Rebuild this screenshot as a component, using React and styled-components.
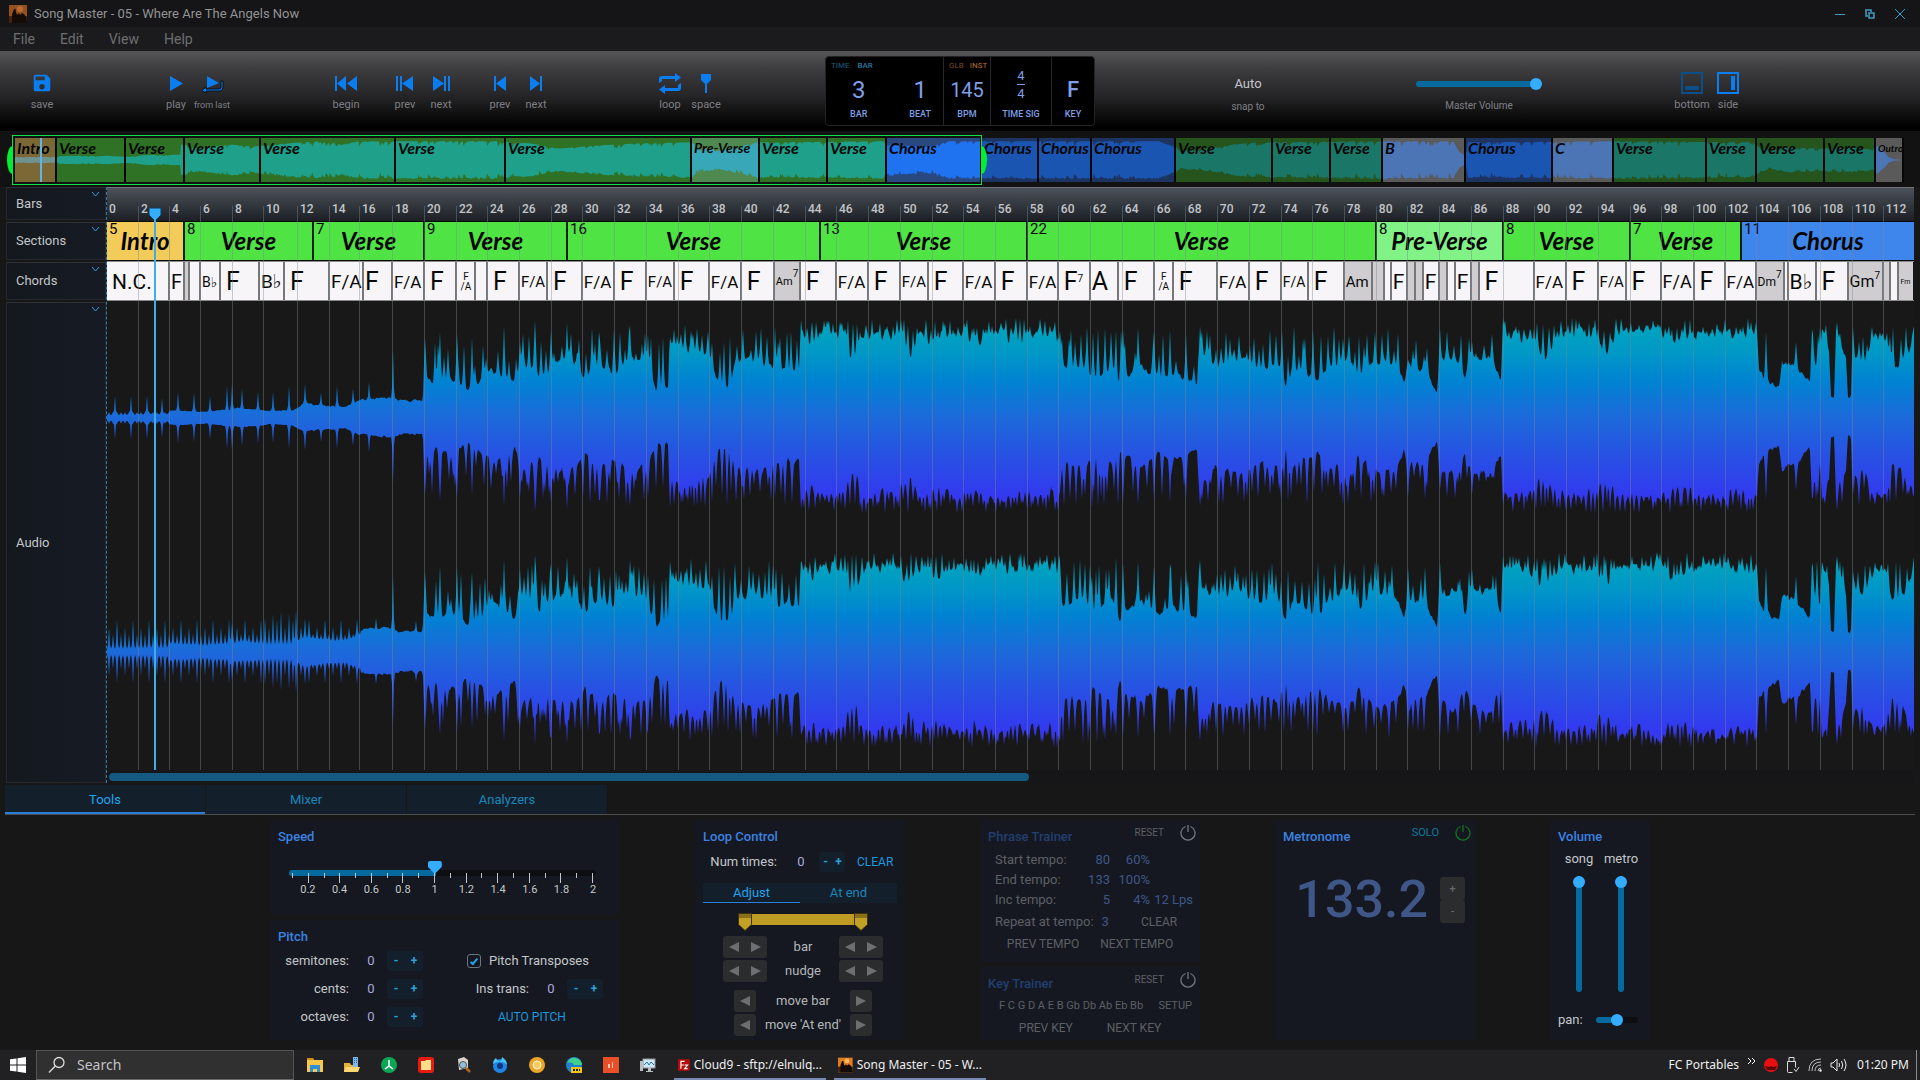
import React from "react";
import styled, { createGlobalStyle, css } from "styled-components";
import { MdSave } from "react-icons/md";

const Global = createGlobalStyle`
  *, *::before, *::after { box-sizing: border-box; }
  body { margin: 0; background: #171718; color: #c4c7ca; font: 13px/16px Roboto, "Liberation Sans", sans-serif; }
  button { font: inherit; color: inherit; background: none; border: 0; padding: 0; }
`;

const c = {
  blue: "#0a7df0",
  title: "#3b82e0",
  thumb: "#35adff",
  track: "#076a9e",
  panel: "#151820",
  tab: "#13202b",
  dim: "#5c6065",
  dimBlue: "#3f5788",
};

/* ---------- shell ---------- */

const Shell = styled.div`
  min-height: 100vh;
  display: flex;
  flex-direction: column;
`;

const TitleBar = styled.header`
  height: 27px;
  display: flex;
  align-items: center;
  gap: 7px;
  padding: 0 5px 0 9px;
  background: #151517;
  color: #929294;
`;

const WindowButtons = styled.div`
  margin-left: auto;
  display: flex;
  button { width: 30px; height: 24px; color: #3f9dc4; display: grid; place-items: center; }
`;

const MenuBar = styled.nav`
  height: 24px;
  display: flex;
  align-items: center;
  gap: 25px;
  padding: 0 13px;
  background: #1b1b1d;
  color: #6e6e70;
  font-size: 14px;
`;

const Toolbar = styled.div`
  height: 80px;
  display: grid;
  grid-template-columns: 1fr 270px 1fr;
  background: linear-gradient(#565658 0%, #3d3d3f 22%, #262628 55%, #000 95%);
`;

const ToolSide = styled.div`
  display: flex;
  align-items: flex-start;
  padding: ${(p) => (p.$right ? "21px 174px 0 117px" : "21px 0 0 24px")};
  justify-content: ${(p) => (p.$right ? "space-between" : "flex-start")};
`;

const ToolGroup = styled.div`
  display: flex;
  margin-right: ${(p) => p.$gap || 0}px;
`;

const Tool = styled.button`
  width: 36px;
  display: flex;
  flex-direction: column;
  align-items: center;
  gap: 4px;
  color: #7f7f83;
  font-size: ${(p) => (p.$small ? 9 : 11)}px;
  line-height: 14px;
  white-space: nowrap;
  svg { color: ${(p) => (p.$muted ? "#0c4f88" : c.blue)}; height: 22px; }
`;

const Snap = styled.label`
  width: 72px;
  display: flex;
  flex-direction: column;
  align-items: center;
  gap: 5px;
  color: #7f7f83;
  font-size: 10px;
  padding-top: 2px;
  button { color: #c4c7ca; font-size: 13px; line-height: 20px; }
`;

/* ---------- sliders ---------- */

const houseThumb = css`
  width: 14px; height: 13px; border-radius: 2px; margin-top: -9px;
  clip-path: polygon(0 0, 100% 0, 100% 45%, 50% 100%, 0 45%);
`;

const roundThumb = css`
  width: 12px; height: 12px; border-radius: 50%; margin-top: -3px;
`;

const Range = styled.input`
  appearance: none;
  display: block;
  margin: 0;
  width: ${(p) => p.$length}px;
  height: 14px;
  background: transparent;
  &::-webkit-slider-runnable-track {
    height: 6px;
    border-radius: 3px;
    background: linear-gradient(90deg, ${c.track} ${(p) => p.$fill}%, #0d0e11 ${(p) => p.$fill}%);
  }
  &::-webkit-slider-thumb {
    appearance: none;
    background: ${c.thumb};
    ${(p) => (p.$house ? houseThumb : roundThumb)}
  }
`;

const VRange = styled.input`
  appearance: none;
  display: block;
  margin: 0;
  writing-mode: vertical-lr;
  direction: rtl;
  width: 14px;
  height: 116px;
  background: transparent;
  &::-webkit-slider-runnable-track { width: 6px; border-radius: 3px; background: ${c.track}; }
  &::-webkit-slider-thumb {
    appearance: none; width: 12px; height: 12px; margin-left: -3px; border-radius: 50%; background: ${c.thumb};
  }
`;

const Master = styled.label`
  display: flex;
  flex-direction: column;
  align-items: center;
  gap: 7px;
  color: #7f7f83;
  font-size: 10px;
  padding-top: 5px;
`;

/* ---------- transport display ---------- */

const Lcd = styled.div`
  margin: 5px 0;
  display: grid;
  grid-template-columns: 117px 47px 61px 1fr;
  background: #000;
  border: 1px solid #232327;
  border-radius: 4px;
  color: #7f9fe6;
`;

const LcdCell = styled.div`
  display: flex;
  flex-direction: column;
  border-left: ${(p) => (p.$first ? 0 : "1px solid #26262b")};
  padding-top: 3px;
`;

const LcdModes = styled.div`
  height: 12px;
  display: flex;
  gap: ${(p) => (p.$gap ? 8 : 6)}px;
  padding-left: 5px;
  font-size: 8px;
  line-height: 12px;
  color: ${(p) => (p.$warm ? "#b8702f" : "#2a90c0")};
  span:first-child { opacity: .65; }
`;

const LcdFields = styled.div`
  flex: 1;
  display: flex;
  justify-content: center;
  gap: 42px;
  padding-left: ${(p) => (p.$shift ? 12 : 0)}px;
`;

const LcdField = styled.div`
  display: flex;
  flex-direction: column;
  align-items: center;
  strong {
    height: ${(p) => (p.$tall ? 48 : 36)}px;
    display: flex;
    flex-direction: column;
    justify-content: center;
    font-weight: ${(p) => p.$weight || 400};
    font-size: ${(p) => p.$size || 24}px;
    line-height: 18px;
  }
  small { font-size: 9px; line-height: 12px; font-weight: 500; white-space: nowrap; }
`;

const Fraction = styled.span`
  display: flex;
  flex-direction: column;
  align-items: center;
  font-size: 13px;
  line-height: 17px;
  i { width: 8px; height: 1px; background: #7f9fe6; }
`;

/* ---------- overview ---------- */

const Overview = styled.section`
  position: relative;
  padding: 7px 16px 5px 15px;
  background: #121213;
`;

const OverviewStrip = styled.div`
  height: 44px;
  display: flex;
  overflow: hidden;
`;

const MINI_FONT = { "Outro": 10, "Pre-Verse": 14 };

const MiniTile = styled.div`
  position: relative;
  flex: none;
  background: ${(p) => p.$bg};
  border-right: 2px solid #060606;
  overflow: hidden;
  svg { display: block; width: 100%; height: 44px; }
  span {
    position: absolute; left: 2px; top: 1px; color: #050505; white-space: nowrap;
    font: italic 700 ${(p) => MINI_FONT[p.$name] || 16}px/18px Lato, sans-serif;
  }
`;

const Selection = styled.div`
  position: absolute;
  left: 12px;
  width: 50.5%;
  top: 4px;
  bottom: 2px;
  border: 1px solid #10e048;
  &::before, &::after {
    content: ""; position: absolute; top: 10px; bottom: 10px; width: 6px; background: #00ee33;
  }
  &::before { left: -6px; border-radius: 6px 0 0 6px / 15px 0 0 15px; }
  &::after { right: -6px; border-radius: 0 6px 6px 0 / 0 15px 15px 0; }
`;

const MiniCursor = styled.i`
  position: absolute;
  left: 40px;
  top: 7px;
  bottom: 5px;
  width: 2px;
  background: #5fb4e8;
`;

/* ---------- timeline ---------- */

const Timeline = styled.section`
  flex: 1;
  min-height: 400px;
  display: grid;
  grid-template-columns: 100px minmax(0, 1fr);
  padding: 0 6px 2px;
`;

const Heads = styled.div`
  display: flex;
  flex-direction: column;
  gap: 2px;
`;

const Head = styled.div`
  height: ${(p) => (p.$h ? `${p.$h}px` : "auto")};
  flex: ${(p) => (p.$h ? "none" : 1)};
  display: flex;
  align-items: center;
  justify-content: space-between;
  padding: 0 5px 0 9px;
  background: linear-gradient(90deg, #14181e, #161a24);
  border: 1px solid #25282d;
  border-top-color: #2e3136;
  button { align-self: flex-start; height: 12px; color: #2f9fd0; display: grid; place-items: center; }
`;

const Lanes = styled.div`
  position: relative;
  display: flex;
  flex-direction: column;
  border-left: 1px dashed #2a7fa8;
`;

const Ruler = styled.div`
  height: 34px;
  display: flex;
  align-items: flex-end;
  background: linear-gradient(#4d525a, #33383f 50%, #1c2025);
  border-top: 1px solid #70747a;
  font-size: 12px;
  font-weight: 500;
  line-height: 16px;
  color: #c2c5c9;
  padding-bottom: 4px;
  span { flex: none; padding-left: 2px; white-space: nowrap; }
`;

const SectionLane = styled.div`
  height: 40px;
  display: flex;
  border: 1px solid #0a0a0a;
  border-width: 1px 0;
`;

const SectionCell = styled.div`
  position: relative;
  flex: none;
  display: grid;
  place-items: center;
  background: ${(p) => p.$bg};
  color: #050505;
  border-right: ${(p) => (p.$last ? 0 : "2px solid #0c200a")};
  font: italic 700 24px/30px Lato, sans-serif;
  white-space: nowrap;
  small { position: absolute; left: 2px; top: 0; font: 400 15px/15px Roboto, sans-serif; }
`;

const ChordLane = styled.div`
  height: 40px;
  display: flex;
  border: 1px solid #8a8a8c;
  border-width: 1px 0;
  overflow: hidden;
`;

const ChordCell = styled.div`
  flex: none;
  padding-left: ${(p) => (p.$pad ? 5 : 1)}px;
  background: ${(p) => (p.$grey ? "#cfcdcf" : "#f8f5f8")};
  border-right: ${(p) => (p.$last ? 0 : "2px solid #77777a")};
  color: #0a0a0a;
  font: 400 ${(p) => p.$size}px/40px Roboto, "DejaVu Sans", sans-serif;
  white-space: nowrap;
  sup { font-size: 10px; line-height: 10px; vertical-align: 8px; }
`;

const TinyChord = styled.span`
  display: flex;
  flex-direction: column;
  align-items: center;
  padding: 10px 0;
  font-size: 10px;
  line-height: 10px;
`;

const AudioLane = styled.div`
  flex: 1;
  min-height: 0;
  position: relative;
  background: #181818;
  svg { position: absolute; inset: 0; width: 100%; height: 100%; display: block; }
`;

const GridOverlay = styled.div`
  position: absolute;
  inset: 19px 0 13px 0;
  display: flex;
  pointer-events: none;
  i { flex: none; border-right: 1px solid rgba(125, 135, 145, .42); }
  i:last-child { border: 0; }
`;

const Playhead = styled.div`
  position: absolute;
  left: 2%;
  top: 20px;
  bottom: 13px;
  width: 24px;
  display: flex;
  flex-direction: column;
  align-items: center;
  i { flex: 1; width: 2px; background: #3eaeea; margin-top: -2px; }
`;

const ScrollTrack = styled.div`
  height: 13px;
  padding: 3px 2px 2px;
  background: #161618;
  i { display: block; width: 51%; height: 8px; border-radius: 4px; background: #14597f; }
`;

/* ---------- bottom tools ---------- */

const Tabs = styled.div`
  display: flex;
  gap: 1px;
  margin: 0 5px;
  border-bottom: 1px solid #4a4d50;
`;

const Tab = styled.button`
  width: ${(p) => (p.$grow ? "auto" : "200px")};
  flex: ${(p) => (p.$grow ? 1 : "none")};
  height: ${(p) => (p.$grow ? 20 : 29)}px;
  background: ${c.tab};
  color: ${(p) => (p.$on ? "#22a4ee" : "#1b86bb")};
  box-shadow: inset 0 ${(p) => (p.$grow ? -1 : -2)}px ${(p) => (p.$on ? "#2b7fd8" : "transparent")};
`;

const Tools = styled.section`
  display: flex;
  justify-content: center;
  gap: 75px;
  padding: 5px 0 10px;
  height: 235px;
`;

const Stack = styled.div`
  width: ${(p) => p.$w}px;
  display: flex;
  flex-direction: column;
  gap: 5px;
`;

const Panel = styled.div`
  flex: ${(p) => (p.$h ? "none" : 1)};
  height: ${(p) => (p.$h ? `${p.$h}px` : "auto")};
  background: ${c.panel};
  padding: 5px 8px 0;
`;

const PanelHead = styled.div`
  display: flex;
  align-items: flex-start;
  gap: 16px;
  height: 20px;
  margin-right: -4px;
  h2 { margin: 0 auto 0 0; padding-top: 4px; font: 500 13px/16px Roboto, sans-serif; color: ${(p) => (p.$dim ? "#213f70" : c.title)}; }
  button { font-size: 10px; line-height: 16px; }
  svg { display: block; }
`;

const TextButton = styled.button`
  && { font-size: ${(p) => (p.$size || 12)}px; }
  line-height: 16px;
  color: ${(p) => p.$color || "#1b9ade"};
  white-space: nowrap;
`;

const Scale = styled.div`
  padding: 21px 0 0 11px;
`;

const TickRow = styled.div`
  width: 301px;
  height: 10px;
  margin: -7px 0 0 3px;
  display: flex;
  justify-content: space-between;
  position: relative;
  pointer-events: none;
  i { width: 1px; height: 5px; background: #c4c7ca; }
  i:nth-child(even) { height: 10px; }
`;

const ScaleLabels = styled.div`
  display: flex;
  width: 317px;
  margin-left: 3px;
  font-size: 11px;
  line-height: 14px;
  span { flex: 1; text-align: center; }
`;

const PitchGrid = styled.div`
  display: grid;
  grid-template-columns: 174px 1fr;
  margin-top: 6px;
`;

const Rows = styled.div`
  display: flex;
  flex-direction: column;
  gap: 8px;
`;

const Row = styled.div`
  display: flex;
  align-items: center;
  height: 20px;
  justify-content: ${(p) => p.$justify || "flex-start"};
  label { display: flex; align-items: center; gap: 8px; margin-right: 8px; }
`;

const RowLabel = styled.span`
  width: ${(p) => p.$w}px;
  text-align: right;
  white-space: nowrap;
`;

const Value = styled.output`
  width: ${(p) => p.$w || 32}px;
  margin-left: 6px;
  text-align: center;
  color: #a9a8dc;
`;

const Stepper = styled.span`
  width: ${(p) => (p.$narrow ? 26 : 36)}px;
  height: 20px;
  display: flex;
  border-radius: 3px;
  background: ${c.tab};
  color: #2b9fd8;
  font-size: 12px;
  font-weight: 700;
  button { flex: 1; line-height: 20px; }
`;

const Check = styled.input`
  appearance: none;
  width: 14px;
  height: 14px;
  margin: 0;
  border: 1px solid #6c747c;
  border-radius: 3px;
  display: grid;
  place-items: center;
  &::after {
    content: ""; width: 4px; height: 8px; border: solid #22a4ee; border-width: 0 2px 2px 0; transform: rotate(40deg);
  }
`;

const LoopTop = styled.div`
  display: flex;
  align-items: center;
  margin-top: 7px;
  padding-left: 5px;
  height: 20px;
  button:last-child { margin-left: 12px; }
  span button:last-child { margin-left: 0; }
`;

const LoopTabs = styled.div`
  display: flex;
  margin: 11px 0 10px;
  width: 194px;
  border-bottom: 1px solid #46525b;
  button { margin-bottom: -1px; }
`;

const LoopRow = styled.div`
  display: flex;
  align-items: center;
  justify-content: space-between;
  height: 22px;
  margin: 0 14px ${(p) => (p.$gap ? 8 : 2)}px 20px;
  padding: 0 ${(p) => (p.$single ? 11 : 0)}px;
  color: #b4b7ba;
`;

const ArrowBox = styled.span`
  display: flex;
  border-radius: 3px;
  background: #2b2c2e;
  button { width: 22px; height: 22px; display: grid; place-items: center; color: #6c6e70; }
`;

const LoopBar = styled.svg`
  display: block;
  margin: 0 auto 5px 35px;
`;

const Trainer = styled.div`
  color: ${c.dim};
  padding: ${(p) => (p.$rows ? "5px 0 0 7px" : 0)};
`;

const TempoRow = styled.div`
  display: grid;
  grid-template-columns: 78px 37px 40px 43px;
  height: 20px;
  align-items: center;
  white-space: nowrap;
  b { font-weight: 400; text-align: right; color: ${c.dimBlue}; }
`;

const TrainerButtons = styled.div`
  display: flex;
  justify-content: center;
  gap: ${(p) => p.$gap}px;
  height: 20px;
  align-items: center;
`;

const RepeatRow = styled.div`
  display: flex;
  align-items: center;
  height: 24px;
  white-space: nowrap;
  b { font-weight: 400; color: ${c.dimBlue}; margin: 0 32px 0 8px; }
`;

const KeyRow = styled.div`
  display: flex;
  align-items: center;
  justify-content: space-between;
  height: 26px;
  padding: 2px 0 0 11px;
  font-size: 11px;
`;

const Bpm = styled.div`
  display: flex;
  align-items: center;
  justify-content: flex-end;
  gap: 12px;
  margin: 32px 2px 0 0;
  color: ${c.dimBlue};
  font-size: 52px;
  font-weight: 500;
  line-height: 46px;
`;

const BpmButtons = styled.div`
  display: flex;
  flex-direction: column;
  button { width: 25px; height: 23px; border-radius: 3px; background: #2b2c2e; color: #66686b; font-size: 11px; line-height: 20px; }
`;

const VolumeRow = styled.div`
  display: flex;
  justify-content: space-around;
  margin-top: 6px;
  label { width: 40px; display: flex; flex-direction: column; align-items: center; gap: 9px; }
`;

const Pan = styled.label`
  display: flex;
  align-items: center;
  gap: 13px;
  margin-top: 20px;
`;

/* ---------- taskbar ---------- */

const Taskbar = styled.footer`
  height: 30px;
  display: flex;
  align-items: center;
  background: #212124;
  color: #eee;
  font: 12px/16px "Noto Sans", "Open Sans", sans-serif;
`;

const StartButton = styled.button`
  width: 36px;
  height: 30px;
  display: grid;
  place-items: center;
`;

const SearchBox = styled.label`
  width: 258px;
  height: 30px;
  display: flex;
  align-items: center;
  gap: 11px;
  padding-left: 11px;
  background: #303031;
  border: 1px solid #555557;
  border-bottom-color: #6a6a6c;
  input { width: 180px; padding: 0; border: 0; outline: 0; background: none; font: 14px/20px "Noto Sans", sans-serif; color: #ccc; }
  input::placeholder { color: #c2c2c4; opacity: 1; }
`;

const TaskIcons = styled.div`
  display: flex;
  padding-left: 2px;
  button { width: 37px; height: 30px; display: grid; place-items: center; }
`;

const Task = styled.button`
  height: 30px;
  display: flex;
  align-items: center;
  gap: 4px;
  padding: 0 4px;
  margin-left: 8px;
  width: 152px;
  box-shadow: inset 0 -2px #7688b4;
  white-space: nowrap;
`;

const Tray = styled.div`
  margin-left: auto;
  display: flex;
  align-items: center;
  gap: 8px;
  height: 30px;
  padding-right: 7px;
  margin-right: 3px;
  border-right: 1px solid #8c8c8e;
  white-space: nowrap;
  time { margin-left: 2px; }
`;

/* ---------- data ---------- */

const TICKS = [
  107, 139, 170, 201, 233, 264, 298, 330, 360, 393, 425, 457, 488, 520, 552, 583, 615, 647, 679, 710, 742, 774, 806, 837,
  869, 901, 933, 964, 996, 1028, 1059, 1091, 1123, 1155, 1186, 1218, 1250, 1282, 1313, 1345, 1377, 1408, 1440, 1472,
  1504, 1535, 1567, 1599, 1631, 1662, 1694, 1726, 1757, 1789, 1821, 1853, 1884, 1914,
];

const GREEN = "#4fe344";
const SECTIONS = [
  [107, 5, "Intro", "#f2cb58"], [185, 8, "Verse", GREEN], [314, 7, "Verse", GREEN], [425, 9, "Verse", GREEN],
  [568, 16, "Verse", GREEN], [821, 13, "Verse", GREEN], [1028, 22, "Verse", GREEN], [1377, 8, "Pre-Verse", "#80f286"],
  [1504, 8, "Verse", GREEN], [1631, 7, "Verse", GREEN], [1742, 11, "Chorus", "#3f86ec"],
];

const CHORDS = [
  [107, "N.C."], [170, "F"], [185, "", 1], [190, ""], [201, "B♭"], [221, "F"], [260, "B♭"], [285, "F"], [330, "F/A"],
  [364, "F"], [393, "F/A"], [425, "F"], [457, "tiny"], [476, ""], [488, "F"], [520, "F/A"], [548, "F"], [583, "F/A"],
  [615, "F"], [647, "F/A"], [675, "F"], [710, "F/A"], [742, "F"], [775, "Am7", 1], [801, "F"], [837, "F/A"], [869, "F"],
  [901, "F/A"], [929, "F"], [964, "F/A"], [996, "F"], [1028, "F/A"], [1059, "F7"], [1091, "A"], [1119, "F"],
  [1155, "tiny"], [1174, "F"], [1218, "F/A"], [1250, "F"], [1282, "F/A"], [1309, "F"], [1345, "Am", 1], [1373, "", 1],
  [1385, ""], [1392, "F"], [1408, "", 1], [1416, "", 1], [1424, "F"], [1440, "", 1], [1448, ""], [1456, "F"],
  [1472, "", 1], [1480, "F"], [1535, "F/A"], [1567, "F"], [1599, "F/A"], [1627, "F"], [1662, "F/A"], [1695, "F"],
  [1726, "F/A"], [1757, "Dm7", 1], [1785, ""], [1789, "B♭"], [1817, "F"], [1849, "Gm7", 1], [1884, "", 1], [1892, ""],
  [1900, "Fm", 1],
];

// Width of each chord name in ems, so that a name is set as large as its cell allows.
const CHORD_EMS = { "F": 0.6, "A": 0.68, "N.C.": 2.8, "F/A": 1.62, "B♭": 1.15, "Am": 1.6, "Am7": 2, "Dm7": 2, "Gm7": 1.95, "F7": 1, "Fm": 1.5 };
const chordSize = (label, w) => Math.min(25, Math.floor((w - 3) / (CHORD_EMS[label] || 1)));

const MINI_COLORS = {
  intro: ["#7c6835", "#6f9390"], v: ["#2f7226", "#1fa08a"], pv: ["#4e8a50", "#38a7b8"], ch: ["#2a4880", "#1f72f0"],
  vd: ["#25541d", "#1a7768"], chd: ["#1e3460", "#1b55b2"], n: ["#5a5a5a", "#4c75b6"],
};
const MINI = [
  [15, "Intro", "intro"], [57, "Verse", "v"], [126, "Verse", "v"], [185, "Verse", "v"], [261, "Verse", "v"],
  [396, "Verse", "v"], [506, "Verse", "v"], [692, "Pre-Verse", "pv"], [760, "Verse", "v"], [828, "Verse", "v"],
  [887, "Chorus", "ch"], [982, "Chorus", "chd"], [1039, "Chorus", "chd"], [1092, "Chorus", "chd"],
  [1176, "Verse", "vd"], [1273, "Verse", "vd"], [1331, "Verse", "vd"], [1383, "B", "n"], [1466, "Chorus", "chd"],
  [1553, "C", "n"], [1614, "Verse", "vd"], [1707, "Verse", "vd"], [1757, "Verse", "vd"], [1825, "Verse", "vd"],
  [1876, "Outro", "n"],
];

/* ---------- wave forms ---------- */

const rng = (seed) => () => {
  seed = (seed * 1664525 + 1013904223) % 4294967296;
  return seed / 4294967296;
};

const lerpAt = (pts, x) => {
  for (let i = 1; i < pts.length; i++) {
    if (x < pts[i][0]) {
      const [x0, a] = pts[i - 1];
      const [x1, b] = pts[i];
      return a + ((b - a) * (x - x0)) / (x1 - x0);
    }
  }
  return pts[pts.length - 1][1];
};

// Level of the solid body of the sound along the song.
const BODY = [
  [107, 3], [169, 4], [170, 8], [205, 6], [240, 10], [270, 7], [293, 8], [304, 15], [325, 12], [345, 11], [360, 18],
  [392, 20], [400, 17], [424, 18], [425, 39], [436, 33], [450, 40], [468, 27], [478, 33], [492, 48], [515, 33],
  [522, 58], [540, 42], [560, 56], [575, 54], [585, 38], [600, 56], [612, 43], [632, 58], [648, 50], [656, 28],
  [668, 28], [670, 70], [690, 64], [709, 66], [712, 50], [720, 32], [731, 30], [734, 54], [760, 58], [775, 48],
  [799, 44], [802, 82], [812, 76], [825, 84], [845, 80], [850, 60], [856, 60], [862, 82], [900, 80], [911, 63],
  [918, 84], [935, 72], [960, 84], [975, 76], [1000, 86], [1018, 78], [1040, 82], [1058, 78], [1062, 50], [1085, 52],
  [1093, 38], [1112, 52], [1121, 30], [1125, 42], [1140, 52], [1158, 38], [1175, 44], [1197, 35], [1200, 68],
  [1215, 54], [1240, 58], [1262, 48], [1278, 54], [1287, 26], [1292, 50], [1318, 38], [1330, 52], [1350, 60],
  [1358, 40], [1375, 58], [1395, 54], [1404, 36], [1408, 50], [1426, 48], [1430, 38], [1437, 26], [1440, 56],
  [1456, 60], [1465, 38], [1472, 60], [1490, 62], [1501, 38], [1504, 84], [1530, 78], [1545, 60], [1556, 78],
  [1580, 84], [1608, 66], [1618, 86], [1660, 84], [1675, 74], [1700, 84], [1720, 86], [1740, 78], [1757, 84],
  [1759, 50], [1765, 38], [1779, 32], [1782, 54], [1796, 50], [1810, 34], [1813, 56], [1820, 50], [1822, 88],
  [1829, 66], [1831, 21], [1834, 21], [1836, 76], [1846, 60], [1848, 20], [1851, 20], [1853, 68], [1863, 54],
  [1874, 82], [1885, 82], [1892, 48], [1900, 52], [1910, 70], [1914, 88],
];

// [from, to, lowest spike, highest spike, mean distance between spikes]
const SPIKE_ZONES = [
  [425, 520, 50, 82, 7], [520, 648, 64, 90, 5], [648, 668, 72, 84, 7], [670, 710, 78, 94, 4], [712, 800, 66, 92, 5],
  [801, 1060, 86, 100, 4], [1060, 1122, 74, 95, 5], [1123, 1198, 50, 84, 12], [1199, 1286, 66, 90, 5],
  [1288, 1400, 62, 92, 5], [1408, 1428, 58, 86, 5], [1440, 1500, 62, 90, 5], [1503, 1757, 86, 100, 4],
  [1812, 1828, 80, 94, 5], [1837, 1846, 84, 94, 4], [1853, 1875, 72, 92, 5], [1875, 1914, 78, 92, 5],
];

const SPIKES = {
  left: [
    [115, 22], [131, 22], [147, 22], [162, 20], [178, 26], [194, 25], [210, 22], [227, 32], [232, 34], [242, 29],
    [258, 26], [273, 26], [289, 32], [305, 34], [321, 25], [337, 32], [353, 29], [369, 36], [393, 68],
  ],
  right: [
    [265, 34], [273, 38], [281, 40], [289, 38], [296, 42], [305, 34], [232, 30], [376, 34], [393, 76], [416, 31],
  ],
};
for (let x = 109, i = 0; x < 360; x += 4, i++) SPIKES.right.push([x, [25, 18, 33, 18][i % 4]]);
for (let x = 109; x < 170; x += 4) SPIKES.left.push([x, 6]);
const SHARED_SPIKES = [
  [425, 80], [440, 86], [457, 84], [472, 80], [504, 92], [535, 97], [551, 88], [567, 95], [599, 86], [630, 92],
  [1123, 89], [1138, 90], [1154, 86], [1170, 88], [1186, 84], [1200, 92], [1766, 86], [1796, 76], [1813, 80], [1837, 96],
];

function envelope(side, seed, soft) {
  const rand = rng(seed);
  const out = [];
  let drift = 0;
  for (let x = 107; x <= 1914; x++) {
    drift = drift * 0.6 + (rand() - 0.5) * 0.4;
    let body = lerpAt(BODY, x);
    if (side === "right" && x > 360 && x < 425) body += 4;
    out.push(body * (1 + drift * 0.28) * soft);
  }
  const put = (x, a) => {
    const fall = x < 424 ? [1, 0.2, 0] : [1, 0.4, 0.05];
    for (let d = -2; d <= 2; d++) {
      const i = x - 107 + d;
      if (i < 0 || i >= out.length) continue;
      out[i] = Math.max(out[i], out[i] + (a - out[i]) * fall[Math.abs(d)]);
    }
  };
  SPIKES[side].forEach(([x, a]) => put(x, a));
  SHARED_SPIKES.forEach(([x, a]) => put(x, a));
  SPIKE_ZONES.forEach(([a, b, lo, hi, gap]) => {
    for (let x = a; x < b; x += 2 + Math.round(rand() * (gap * 2 - 4))) put(x, lo + (hi - lo) * rand());
  });
  return out;
}

function wavePath(side, mid, seed) {
  const top = envelope(side, seed, 1);
  const bottom = envelope(side, seed + 77, 0.95);
  return (
    "M0 " + mid + top.map((a, i) => `L${i} ${(mid - a).toFixed(1)}`).join("") +
    bottom.map((a, i) => [i, a]).reverse().map(([i, a]) => `L${i} ${(mid + a * 0.96).toFixed(1)}`).join("") + "Z"
  );
}

const LEFT_WAVE = wavePath("left", 117, 11);
const RIGHT_WAVE = wavePath("right", 351, 29);

const MINI_BODY = [
  [15, 3], [57, 3], [60, 4], [110, 4], [126, 3], [150, 5], [182, 5], [183, 15], [200, 11], [230, 15], [255, 13],
  [275, 15], [315, 18], [330, 17], [345, 15], [360, 18], [505, 18], [512, 17], [530, 16], [560, 11], [600, 14],
  [640, 16], [691, 17], [700, 12], [720, 9], [735, 12], [760, 17], [885, 18], [895, 14], [930, 13], [950, 18],
  [1160, 18], [1175, 13], [1180, 9], [1210, 11], [1235, 15], [1260, 17], [1381, 18], [1455, 18], [1461, 8], [1466, 5],
  [1468, 17], [1612, 18], [1756, 17], [1758, 13], [1770, 9], [1790, 12], [1824, 11], [1850, 12], [1875, 10],
  [1877, 14], [1884, 9], [1890, 3], [1894, 1], [1904, 0],
];
const miniRand = rng(5);
const MINI_TOP = [];
const MINI_BOTTOM = [];
let dip = 0;
for (let x = 15; x <= 1904; x++) {
  const b = lerpAt(MINI_BODY, x);
  dip = miniRand() < 0.16 ? 0.3 * miniRand() : dip * 0.5;
  MINI_TOP.push(b * (1.04 - dip));
  MINI_BOTTOM.push(b * (0.97 - dip + miniRand() * 0.1));
}
function miniPath(from, to) {
  let up = `M0 22`;
  let down = "";
  for (let x = from; x <= to; x++) {
    up += `L${x - from} ${(22 - MINI_TOP[x - 15]).toFixed(1)}`;
    down = `L${x - from} ${(22 + MINI_BOTTOM[x - 15]).toFixed(1)}` + down;
  }
  return up + down + "Z";
}

const spans = (rows, end) => rows.map((r, i) => [...r, (i + 1 < rows.length ? rows[i + 1][0] : end) - r[0]]);
const share = (w, total) => ({ width: `${(w / total) * 100}%` });

/* ---------- small parts ---------- */

const AppLogo = ({ size = 18, lit }) => (
  <svg width={size} height={size} viewBox="0 0 18 18" aria-hidden="true">
    <rect width="18" height="18" fill={lit ? "#e07c22" : "#95501f"} />
    <rect y="11" width="18" height="7" fill="#4a220d" />
    <circle cx="11" cy="4" r="3" fill={lit ? "#ffb55a" : "#b96d34"} />
    <path d="M3 18V9l1-2 1-3 1.500 0 .5 3 1 3 1-1 1-1 1 2 2-2 2 1 2 3 1 6z" fill="#140b07" />
  </svg>
);

const Svg = ({ w = 24, h = 22, children }) => (
  <svg width={w} height={h} viewBox={`0 0 ${w} ${h}`} fill="currentColor" aria-hidden="true">{children}</svg>
);

const Chevron = () => (
  <svg width="9" height="6" viewBox="0 0 9 6" fill="none" stroke="currentColor" aria-hidden="true">
    <path d="M1 1l3.500 4L8 1" />
  </svg>
);

const Power = ({ color = "#73777b" }) => (
  <svg width="16" height="16" viewBox="0 0 16 16" fill="none" stroke={color} strokeWidth="1.300" aria-hidden="true">
    <path d="M5.500 1.500a7 7 0 1 0 5 0M8 0v7" />
  </svg>
);

const Arrow = ({ left }) => (
  <svg width="10" height="12" viewBox="0 0 10 12" fill="currentColor" aria-hidden="true">
    <path d={left ? "M10 1v10L0 6z" : "M0 1v10l10-5z"} />
  </svg>
);

const Steps = ({ narrow, name }) => (
  <Stepper $narrow={narrow}>
    <button aria-label={`${name} down`}>-</button>
    <button aria-label={`${name} up`}>+</button>
  </Stepper>
);

const LRBox = ({ name }) => (
  <ArrowBox>
    <button aria-label={`${name} left`}><Arrow left /></button>
    <button aria-label={`${name} right`}><Arrow /></button>
  </ArrowBox>
);

const PitchRow = ({ label, w = 71 }) => (
  <Row>
    <RowLabel $w={w}>{label}</RowLabel>
    <Value>0</Value>
    <Steps name={label} />
  </Row>
);

function Chord({ label }) {
  if (label === "tiny") return <TinyChord><span>F</span><span>/A</span></TinyChord>;
  if (label.endsWith("7")) return <>{label.slice(0, -1)}<sup>7</sup></>;
  return label;
}

/* ---------- toolbar ---------- */

function TransportBar() {
  return (
    <Toolbar>
      <ToolSide>
        <ToolGroup $gap={98}>
          <Tool><MdSave size={24} />save</Tool>
        </ToolGroup>
        <ToolGroup $gap={98}>
          <Tool><Svg><path d="M6 4v15l13-7.500z" /></Svg>play</Tool>
          <Tool $small>
            <Svg>
              <path d="M7 4v12l12-5z" />
              <path d="M21 9v6q0 2-2 2H6v-2l-4 3.500L6 21v-2h14q3 0 3-4V9z" stroke="#06101a" />
            </Svg>
            from last
          </Tool>
        </ToolGroup>
        <ToolGroup $gap={23}>
          <Tool><Svg><path d="M1 4h2v15H1zM12 4v15L3 11.500zM23 4v15l-10-7.500z" /></Svg>begin</Tool>
        </ToolGroup>
        <ToolGroup $gap={23}>
          <Tool><Svg><path d="M3 4h2v15H3zM7 4h2v15H7zM20 4v15l-11-7.500z" /></Svg>prev</Tool>
          <Tool><Svg><path d="M19 4h2v15h-2zM15 4h2v15h-2zM4 4v15l11-7.500z" /></Svg>next</Tool>
        </ToolGroup>
        <ToolGroup $gap={98}>
          <Tool><Svg><path d="M6 4h2v15H6zM18 4v15L8 11.500z" /></Svg>prev</Tool>
          <Tool><Svg><path d="M16 4h2v15h-2zM6 4v15l10-7.500z" /></Svg>next</Tool>
        </ToolGroup>
        <ToolGroup>
          <Tool>
            <Svg>
              <path d="M1 11V7q0-3 3-3h13V1l6 4.500L17 10V7H4v2zM23 11v5q0 3-3 3H7v3l-6-4.500L7 13v3h13v-3z" />
            </Svg>
            loop
          </Tool>
          <Tool><Svg><path d="M7 2h10v6l-4 4v9h-2v-9L7 8z" /></Svg>space</Tool>
        </ToolGroup>
      </ToolSide>
      <Lcd>
        <LcdCell $first>
          <LcdModes $gap><span>TIME</span><span>BAR</span></LcdModes>
          <LcdFields $shift>
            <LcdField><strong>3</strong><small>BAR</small></LcdField>
            <LcdField><strong>1</strong><small>BEAT</small></LcdField>
          </LcdFields>
        </LcdCell>
        <LcdCell>
          <LcdModes $warm><span>GLB</span><span>INST</span></LcdModes>
          <LcdFields><LcdField $size={20}><strong>145</strong><small>BPM</small></LcdField></LcdFields>
        </LcdCell>
        <LcdCell>
          <LcdFields>
            <LcdField $tall>
              <strong><Fraction><span>4</span><i /><span>4</span></Fraction></strong><small>TIME SIG</small>
            </LcdField>
          </LcdFields>
        </LcdCell>
        <LcdCell>
          <LcdModes />
          <LcdFields><LcdField $size={22} $weight={500}><strong>F</strong><small>KEY</small></LcdField></LcdFields>
        </LcdCell>
      </Lcd>
      <ToolSide $right>
        <Snap><button>Auto</button>snap to</Snap>
        <Master>
          <Range type="range" defaultValue={100} $length={126} $fill={96} />
          Master Volume
        </Master>
        <ToolGroup>
          <Tool $muted>
            <Svg w={22}><path d="M0 0h22v22H0zM2 2v18h18V2zM4 14h14v4H4z" fillRule="evenodd" /></Svg>bottom
          </Tool>
          <Tool>
            <Svg w={22}><path d="M0 0h22v22H0zM2 2v18h18V2zM14 4h4v14h-4z" fillRule="evenodd" /></Svg>side
          </Tool>
        </ToolGroup>
      </ToolSide>
    </Toolbar>
  );
}

function SongOverview() {
  return (
    <Overview>
      <OverviewStrip>
        {spans(MINI, 1904).map(([x, name, kind, w]) => (
          <MiniTile key={x} $bg={MINI_COLORS[kind][0]} $name={name} style={share(w, 1889)}>
            <svg viewBox={`0 0 ${w} 44`} preserveAspectRatio="none" aria-hidden="true">
              <path d={miniPath(x, x + w)} fill={MINI_COLORS[kind][1]} />
            </svg>
            <span>{name}</span>
          </MiniTile>
        ))}
      </OverviewStrip>
      <MiniCursor />
      <Selection />
    </Overview>
  );
}

function Tracks() {
  const ticks = TICKS.slice(0, -1).map((x, i) => [i * 2, TICKS[i + 1] - x]);
  return (
    <Timeline>
      <Heads>
        {[["Bars", 33], ["Sections", 38], ["Chords", 38], ["Audio", 0]].map(([name, h]) => (
          <Head key={name} $h={h}>
            {name}
            <button aria-label={`Collapse ${name}`}><Chevron /></button>
          </Head>
        ))}
      </Heads>
      <Lanes>
        <Ruler>{ticks.map(([n, w]) => <span key={n} style={share(w, 1807)}>{n}</span>)}</Ruler>
        <SectionLane>
          {spans(SECTIONS, 1914).map(([x, n, name, bg, w], i) => (
            <SectionCell key={x} $bg={bg} $last={i === SECTIONS.length - 1} style={share(w, 1807)}>
              <small>{n}</small>{name}
            </SectionCell>
          ))}
        </SectionLane>
        <ChordLane>
          {spans(CHORDS.map(([x, l, g]) => [x, l, g || 0]), 1914).map(([x, label, grey, w], i) => (
            <ChordCell
              key={x} $grey={grey} $size={chordSize(label, w)} $pad={label.length !== 3 && w > 30}
              $last={i === CHORDS.length - 1} style={share(w, 1807)}
            >
              <Chord label={label} />
            </ChordCell>
          ))}
        </ChordLane>
        <AudioLane>
          <svg viewBox="0 0 1807 469" preserveAspectRatio="none" aria-label="Stereo wave form">
            <defs>
              {[["ga", 0], ["gb", 234]].map(([id, dy]) => (
                <linearGradient key={id} id={id} gradientUnits="userSpaceOnUse" x1="0" x2="0" y1={16 + dy} y2={216 + dy}>
                  <stop offset="0" stopColor="#00a8bc" />
                  <stop offset=".18" stopColor="#0098c6" />
                  <stop offset=".32" stopColor="#0083d2" />
                  <stop offset=".5" stopColor="#1c6ada" />
                  <stop offset=".7" stopColor="#2850e4" />
                  <stop offset=".9" stopColor="#3338f0" />
                  <stop offset="1" stopColor="#3a3cd8" />
                </linearGradient>
              ))}
            </defs>
            <path d={LEFT_WAVE} fill="url(#ga)" />
            <path d={RIGHT_WAVE} fill="url(#gb)" />
          </svg>
        </AudioLane>
        <ScrollTrack><i /></ScrollTrack>
        <GridOverlay>{ticks.map(([n, w]) => <i key={n} style={share(w, 1807)} />)}</GridOverlay>
        <Playhead>
          <svg width="14" height="15" viewBox="0 0 14 15" aria-hidden="true">
            <path d="M1 1h12v7l-6 6-6-6z" fill={c.thumb} stroke="#123a55" />
          </svg>
          <i />
        </Playhead>
      </Lanes>
    </Timeline>
  );
}

function SpeedPitch() {
  return (
    <Stack $w={350}>
      <Panel $h={95}>
        <PanelHead><h2>Speed</h2></PanelHead>
        <Scale>
          <Range type="range" aria-label="Speed" min={0.1} max={2} step={0.1} defaultValue={1} $length={307} $fill={48} $house />
          <TickRow>{Array.from({ length: 20 }, (_, i) => <i key={i} />)}</TickRow>
          <ScaleLabels>
            {["0.2", "0.4", "0.6", "0.8", "1", "1.2", "1.4", "1.6", "1.8", "2"].map((t) => <span key={t}>{t}</span>)}
          </ScaleLabels>
        </Scale>
      </Panel>
      <Panel>
        <PanelHead><h2>Pitch</h2></PanelHead>
        <PitchGrid>
          <Rows>
            <PitchRow label="semitones:" />
            <PitchRow label="cents:" />
            <PitchRow label="octaves:" />
          </Rows>
          <Rows>
            <Row $justify="center"><label><Check type="checkbox" defaultChecked />Pitch Transposes</label></Row>
            <PitchRow label="Ins trans:" w={77} />
            <Row $justify="center"><TextButton>AUTO PITCH</TextButton></Row>
          </Rows>
        </PitchGrid>
      </Panel>
    </Stack>
  );
}

function LoopControl() {
  return (
    <Stack $w={210}>
      <Panel>
        <PanelHead><h2>Loop Control</h2></PanelHead>
        <LoopTop>
          <RowLabel $w={69}>Num times:</RowLabel>
          <Value $w={36}>0</Value>
          <Steps narrow name="Num times" />
          <TextButton>CLEAR</TextButton>
        </LoopTop>
        <LoopTabs>
          <Tab $grow $on>Adjust</Tab>
          <Tab $grow>At end</Tab>
        </LoopTabs>
        <LoopBar width="130" height="18" viewBox="0 0 130 18" aria-hidden="true">
          <path d="M13 1h104v11H13z" fill="#bf9d24" />
          <path d="M.5.500h13v11l-6.500 6-6.500-6zM116.500.500h13v11l-6.500 6-6.500-6z" fill="#c3a026" stroke="#40340c" />
          <path d="M1 1h12v4H1zM117 1h12v4h-12z" fill="#8a7018" />
        </LoopBar>
        <LoopRow><LRBox name="Start bar" />bar<LRBox name="End bar" /></LoopRow>
        <LoopRow $gap><LRBox name="Start nudge" />nudge<LRBox name="End nudge" /></LoopRow>
        {["move bar", "move 'At end'"].map((t) => (
          <LoopRow key={t} $single>
            <ArrowBox><button aria-label={`${t} left`}><Arrow left /></button></ArrowBox>
            {t}
            <ArrowBox><button aria-label={`${t} right`}><Arrow /></button></ArrowBox>
          </LoopRow>
        ))}
      </Panel>
    </Stack>
  );
}

function Trainers() {
  return (
    <Stack $w={220}>
      <Panel $h={142}>
        <Trainer>
          <PanelHead $dim>
            <h2>Phrase Trainer</h2><button>RESET</button><button aria-label="Phrase trainer power"><Power /></button>
          </PanelHead>
        </Trainer>
        <Trainer $rows>
          <TempoRow><span>Start tempo:</span><b>80</b><b>60%</b></TempoRow>
          <TempoRow><span>End tempo:</span><b>133</b><b>100%</b></TempoRow>
          <TempoRow><span>Inc tempo:</span><b>5</b><b>4%</b><b>12 Lps</b></TempoRow>
          <RepeatRow>Repeat at tempo:<b>3</b><TextButton $color={c.dim}>CLEAR</TextButton></RepeatRow>
        </Trainer>
        <TrainerButtons $gap={21}>
          <TextButton $color={c.dim}>PREV TEMPO</TextButton>
          <TextButton $color={c.dim}>NEXT TEMPO</TextButton>
        </TrainerButtons>
      </Panel>
      <Panel>
        <Trainer>
          <PanelHead $dim>
            <h2>Key Trainer</h2><button>RESET</button><button aria-label="Key trainer power"><Power /></button>
          </PanelHead>
          <KeyRow>
            <span>F C G D A E B Gb Db Ab Eb Bb</span>
            <TextButton $size={11} $color={c.dim}>SETUP</TextButton>
          </KeyRow>
          <TrainerButtons $gap={34}>
            <TextButton $color={c.dim}>PREV KEY</TextButton>
            <TextButton $color={c.dim}>NEXT KEY</TextButton>
          </TrainerButtons>
        </Trainer>
      </Panel>
    </Stack>
  );
}

const TaskGlyph = ({ kind }) => {
  const g = {
    folder: <><path d="M0 1h6l1 2h9v12H0z" fill="#f7c64b" /><path d="M0 1h6l1 2H0z" fill="#c98f1a" /><path d="M3 8h10v7h-3v-3H6v3H3z" fill="#2f8fd8" /></>,
    zip: <><path d="M0 6h6l1 2h6v7H0z" fill="#e9b23c" /><path d="M9 0h5v10H9z" fill="#7fb8ea" /><path d="M10 1h1v1h-1zM12 1h1v1h-1zM10 3h1v1h-1zM12 3h1v1h-1zM10 5h1v1h-1zM12 5h1v1h-1z" fill="#1d5fa0" /><path d="M2 10h14l-2 5H0z" fill="#ffd873" /></>,
    green: <><circle cx="8" cy="8" r="8" fill="#0aa557" /><path d="M8 3v6l-4 3M8 9l4 3" stroke="#fff" strokeWidth="1.500" fill="none" /></>,
    red: <><rect width="16" height="16" rx="3" fill="#e81b12" /><path d="M3 4h4l1-1h5v10H3z" fill="#ffe08a" /></>,
    finder: <><path d="M3 2l6-2 4 3v8l-9 2z" fill="#d8d4c8" /><circle cx="8" cy="8" r="3.500" fill="#8fc0e0" stroke="#555" /><path d="M11 11l4 4" stroke="#b5651d" strokeWidth="2.500" /></>,
    firefox: <><circle cx="8" cy="9" r="7" fill="#1f86e8" /><path d="M1 7q0-4 3-6 1 3 4 3 2-1 2-4 5 3 5 8-2-3-5-3-5-1-9 2z" fill="#4bc3f5" /><circle cx="8" cy="9" r="3" fill="#12357c" /></>,
    chrome: <><circle cx="8" cy="8" r="8" fill="#e9a62a" /><circle cx="8" cy="8" r="4" fill="#f6cd62" stroke="#fff3cf" /></>,
    edge: <><circle cx="8" cy="8" r="8" fill="#1c82cf" /><path d="M1 6q3-6 9-5 6 2 6 7H8q-2-4-7-2z" fill="#3fd08c" /><path d="M5 10h11v6H5z" fill="#f2c21a" /><path d="M7 13h7" stroke="#222" strokeWidth="2" strokeDasharray="2 1" /></>,
    orange: <><rect width="16" height="16" fill="#e9502a" /><path d="M5 7h2v4H5zM9 5h1v6H9z" fill="#ffc9b5" /></>,
    monitor: <><rect x="3" y="2" width="12" height="9" fill="#cfe6f4" stroke="#8f989e" /><path d="M4 8l3-3 2 3 2-3 3 3" stroke="#2077b0" fill="none" /><path d="M8 11h3v3h2v1H6v-1h2zM0 4h3v10H0z" fill="#b9bec2" /></>,
    fz: <><rect width="16" height="16" rx="1" fill="#b50d0d" /><path d="M4 13V3h5M4 8h4M9 8h4l-4 5h4" stroke="#fff" strokeWidth="1.600" fill="none" /></>,
  };
  return <svg width="16" height="16" viewBox="0 0 16 16" aria-hidden="true">{g[kind]}</svg>;
};

function OsTaskbar() {
  return (
    <Taskbar>
      <StartButton aria-label="Start">
        <svg width="16" height="16" viewBox="0 0 16 16" fill="#fff" aria-hidden="true">
          <path d="M0 2.300l6.500-.9v6.100H0zM7.500 1.200L16 0v7.500H7.500zM0 8.500h6.500v6.100L0 13.700zM7.500 8.500H16V16l-8.500-1.200z" />
        </svg>
      </StartButton>
      <SearchBox>
        <svg width="18" height="18" viewBox="0 0 18 18" fill="none" stroke="#ddd" strokeWidth="1.300" aria-hidden="true">
          <circle cx="11" cy="6.500" r="5" /><path d="M7.300 10L1 16.500" />
        </svg>
        <input placeholder="Search" aria-label="Search" />
      </SearchBox>
      <TaskIcons>
        {["folder", "zip", "green", "red", "finder", "firefox", "chrome", "edge", "orange", "monitor"].map((k) => (
          <button key={k} aria-label={k}><TaskGlyph kind={k} /></button>
        ))}
      </TaskIcons>
      <Task><TaskGlyph kind="fz" />Cloud9 - sftp://elnulq...</Task>
      <Task><AppLogo size={16} lit />Song Master - 05 - W...</Task>
      <Tray>
        <span>FC Portables</span>
        <svg width="9" height="16" viewBox="0 0 9 16" fill="none" stroke="#fff" aria-hidden="true"><path d="M1 1l3 3-3 3M5 1l3 3-3 3" /></svg>
        <svg width="14" height="16" viewBox="0 0 14 16" aria-hidden="true">
          <ellipse cx="7" cy="8" rx="7" ry="7" fill="#e80f12" /><path d="M1 9l4 1 2-1 2 1 4-1-2 4H3z" fill="#5a0505" />
        </svg>
        <svg width="14" height="18" viewBox="0 0 14 18" fill="none" stroke="#ddd" aria-hidden="true">
          <path d="M3 1.500h5v4H3zM1.500 5.500h8v6M1.500 5.500v10q0 1 1 1h4M8 13l2 2.500 3-4.500" />
        </svg>
        <svg width="14" height="14" viewBox="0 0 14 14" fill="none" stroke="#bbb" aria-hidden="true">
          <path d="M1 13Q1 1 13 1M4 13q0-9 9-9M7 13q0-6 6-6M10 13q0-3 3-3" /><circle cx="12.500" cy="12.500" r="1" fill="#fff" />
        </svg>
        <svg width="17" height="14" viewBox="0 0 17 14" fill="none" stroke="#eee" aria-hidden="true">
          <path d="M1 5h2l4-4v12L3 9H1zM9 5q1 2 0 4M11.500 3q2.500 4 0 8M14 1q4 6 0 12" />
        </svg>
        <time>01:20 PM</time>
      </Tray>
    </Taskbar>
  );
}

export default function App() {
  return (
    <Shell>
      <Global />
      <TitleBar>
        <AppLogo />
        Song Master - 05 - Where Are The Angels Now
        <WindowButtons>
          <button aria-label="Minimize"><svg width="10" height="10" stroke="currentColor" aria-hidden="true"><path d="M0 5.500h10" /></svg></button>
          <button aria-label="Restore">
            <svg width="10" height="10" fill="none" stroke="currentColor" strokeWidth="1.500" aria-hidden="true"><path d="M3 7H1V1h5v2M4 4h5v5H4z" /></svg>
          </button>
          <button aria-label="Close"><svg width="10" height="10" stroke="currentColor" aria-hidden="true"><path d="M0 0l10 10M10 0L0 10" /></svg></button>
        </WindowButtons>
      </TitleBar>
      <MenuBar>{["File", "Edit", "View", "Help"].map((m) => <button key={m}>{m}</button>)}</MenuBar>
      <TransportBar />
      <SongOverview />
      <Tracks />
      <Tabs>
        <Tab $on>Tools</Tab>
        <Tab>Mixer</Tab>
        <Tab>Analyzers</Tab>
      </Tabs>
      <Tools>
        <SpeedPitch />
        <LoopControl />
        <Trainers />
        <Stack $w={200}>
          <Panel>
            <PanelHead>
              <h2>Metronome</h2>
              <TextButton $size={11} $color="#0f789c">SOLO</TextButton>
              <button aria-label="Metronome power"><Power color="#12711f" /></button>
            </PanelHead>
            <Bpm>
              133.2
              <BpmButtons><button aria-label="Faster">+</button><button aria-label="Slower">-</button></BpmButtons>
            </Bpm>
          </Panel>
        </Stack>
        <Stack $w={100}>
          <Panel>
            <PanelHead><h2>Volume</h2></PanelHead>
            <VolumeRow>
              <label>song<VRange type="range" defaultValue={100} /></label>
              <label>metro<VRange type="range" defaultValue={100} /></label>
            </VolumeRow>
            <Pan>pan:<Range type="range" defaultValue={50} $length={42} $fill={50} /></Pan>
          </Panel>
        </Stack>
      </Tools>
      <OsTaskbar />
    </Shell>
  );
}
